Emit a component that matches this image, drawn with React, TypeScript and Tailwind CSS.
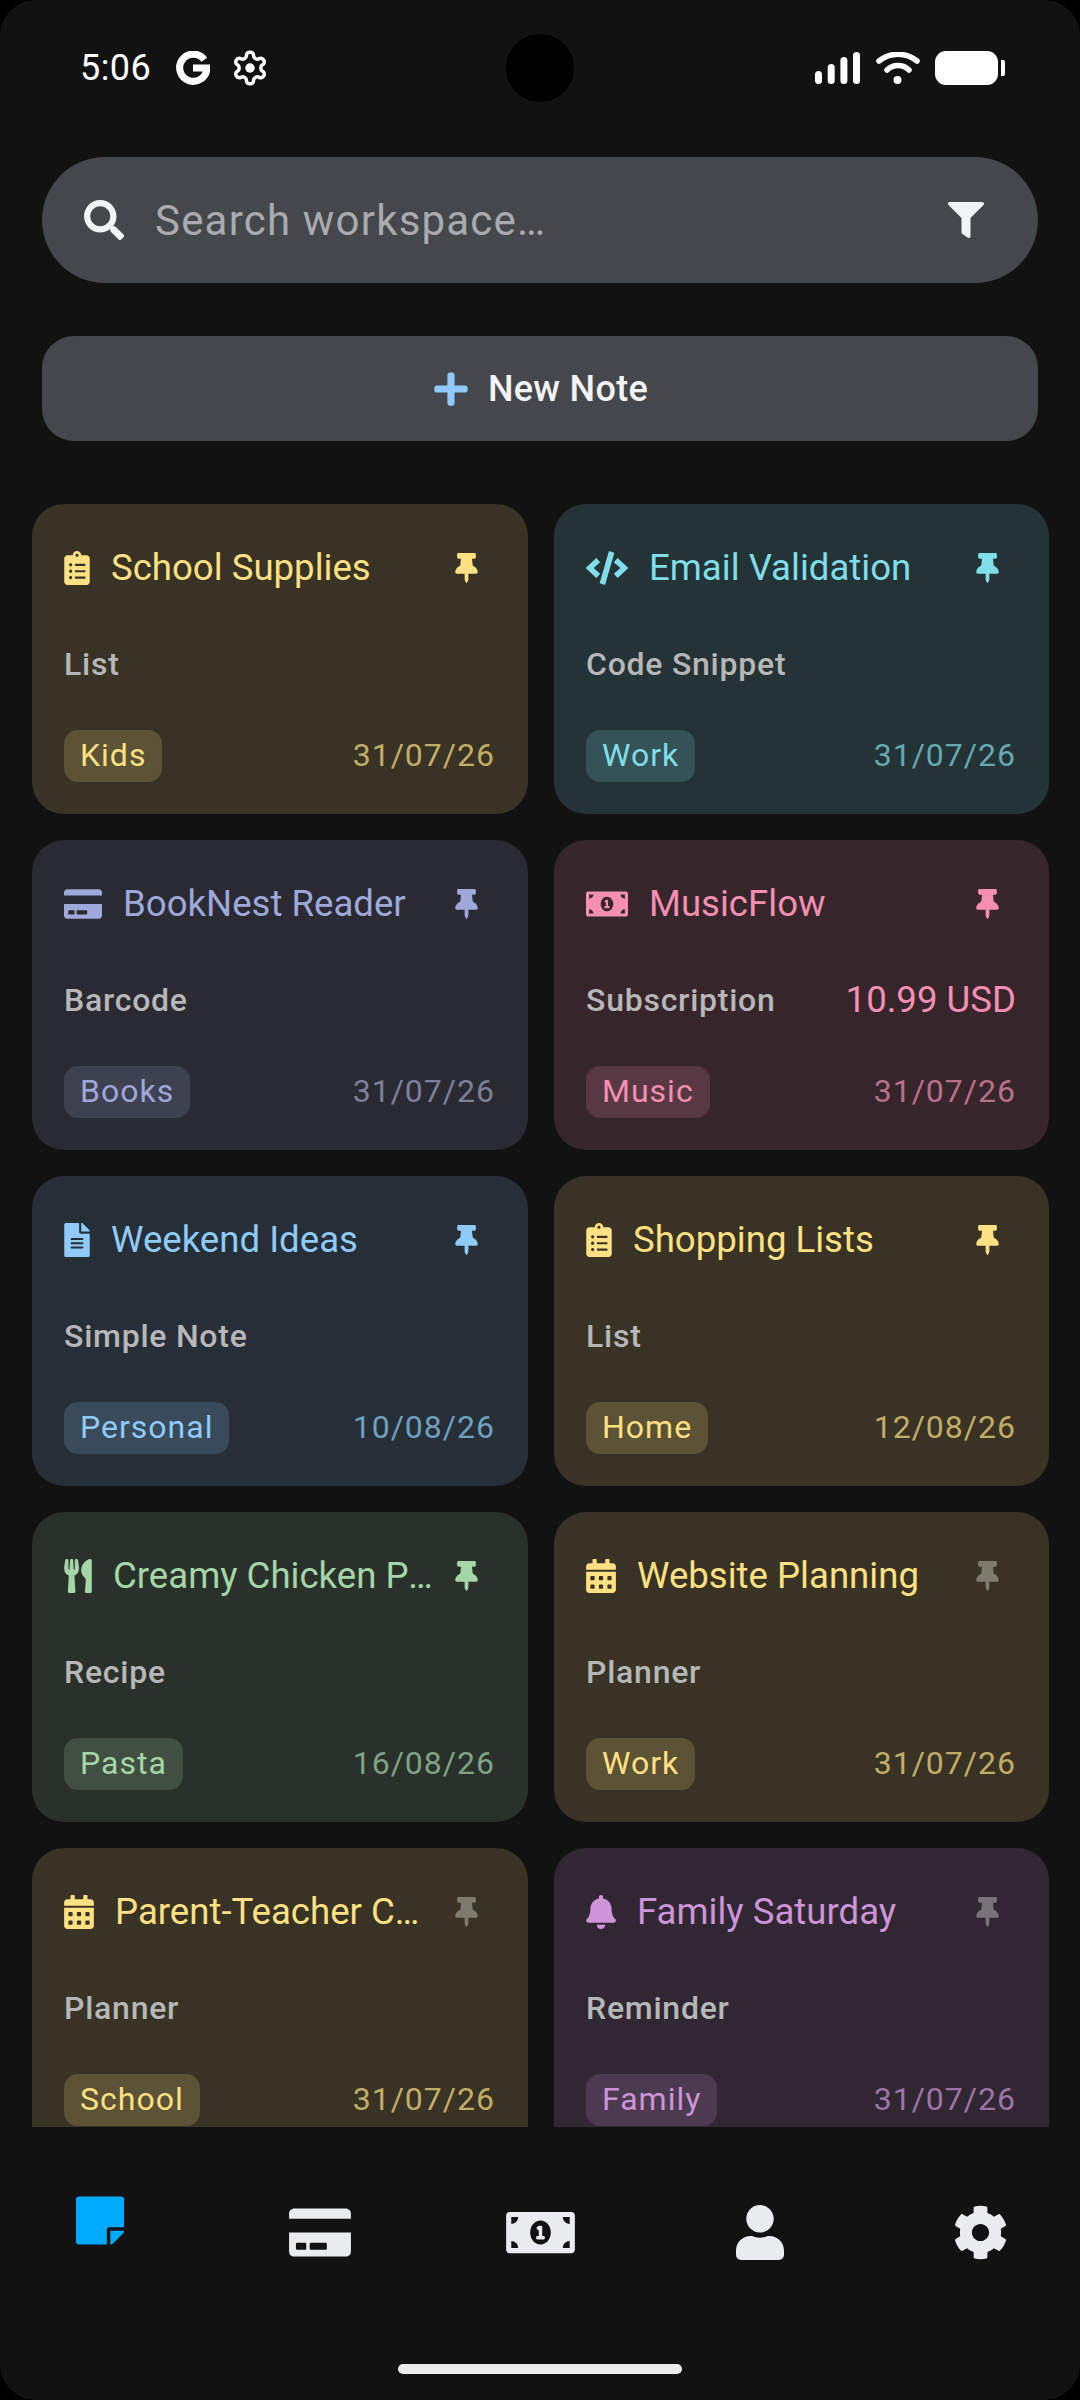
import { FaBell, FaCalendarAlt, FaClipboardList, FaCode, FaCog, FaCreditCard, FaFileAlt, FaFilter, FaMoneyBillAlt, FaPlus, FaSearch, FaStickyNote, FaThumbtack, FaUser, FaUtensils } from 'react-icons/fa'
import type { IconType } from 'react-icons'

type Tone = { card: string; title: string; tag: string; date: string }

const yellow: Tone = { card: 'bg-[#383324]', title: 'text-[#ffe082]', tag: 'bg-[#5c5235]', date: 'text-[#c3ac66]' }
const cyan: Tone = { card: 'bg-[#243335]', title: 'text-[#80deea]', tag: 'bg-[#355256]', date: 'text-[#66a9b2]' }
const indigo: Tone = { card: 'bg-[#292a32]', title: 'text-[#9fa8da]', tag: 'bg-[#3e4150]', date: 'text-[#7d8099]' }
const pink: Tone = { card: 'bg-[#36262b]', title: 'text-[#f48fb1]', tag: 'bg-[#583943]', date: 'text-[#b8708a]' }
const blue: Tone = { card: 'bg-[#262f37]', title: 'text-[#90caf9]', tag: 'bg-[#394b5a]', date: 'text-[#6fa0c0]' }
const green: Tone = { card: 'bg-[#2a312a]', title: 'text-[#a5d6a7]', tag: 'bg-[#404f41]', date: 'text-[#7fa383]' }
const purple: Tone = { card: 'bg-[#302732]', title: 'text-[#ce93d8]', tag: 'bg-[#4c3a50]', date: 'text-[#9e73a8]' }

type Note = {
  title: string
  kind: string
  tag: string
  date: string
  tone: Tone
  icon: IconType
  iconSize: string
  pinned?: boolean
  price?: string
}

const notes: Note[] = [
  { title: 'School Supplies', kind: 'List', tag: 'Kids', date: '31/07/26', tone: yellow, icon: FaClipboardList, iconSize: 'w-[26px]', pinned: true },
  { title: 'Email Validation', kind: 'Code Snippet', tag: 'Work', date: '31/07/26', tone: cyan, icon: FaCode, iconSize: 'w-[42px]', pinned: true },
  { title: 'BookNest Reader', kind: 'Barcode', tag: 'Books', date: '31/07/26', tone: indigo, icon: FaCreditCard, iconSize: 'w-[38px]', pinned: true },
  { title: 'MusicFlow', kind: 'Subscription', tag: 'Music', date: '31/07/26', tone: pink, icon: FaMoneyBillAlt, iconSize: 'w-[42px]', pinned: true, price: '10.99 USD' },
  { title: 'Weekend Ideas', kind: 'Simple Note', tag: 'Personal', date: '10/08/26', tone: blue, icon: FaFileAlt, iconSize: 'w-[26px]', pinned: true },
  { title: 'Shopping Lists', kind: 'List', tag: 'Home', date: '12/08/26', tone: yellow, icon: FaClipboardList, iconSize: 'w-[26px]', pinned: true },
  { title: 'Creamy Chicken Pasta Bake', kind: 'Recipe', tag: 'Pasta', date: '16/08/26', tone: green, icon: FaUtensils, iconSize: 'w-[28px]', pinned: true },
  { title: 'Website Planning', kind: 'Planner', tag: 'Work', date: '31/07/26', tone: yellow, icon: FaCalendarAlt, iconSize: 'w-[30px]' },
  { title: 'Parent-Teacher Conference', kind: 'Planner', tag: 'School', date: '31/07/26', tone: yellow, icon: FaCalendarAlt, iconSize: 'w-[30px]' },
  { title: 'Family Saturday', kind: 'Reminder', tag: 'Family', date: '31/07/26', tone: purple, icon: FaBell, iconSize: 'w-[30px]' },
]

function NoteCard({ note }: { note: Note }) {
  const { tone, icon: Icon } = note

  return (
    <div className={`flex h-[310px] flex-col rounded-[32px] px-[32px] pt-[42px] ${tone.card}`}>
      <div className="flex h-[44px] items-center">
        <Icon className={`h-[34px] shrink-0 ${note.iconSize} ${tone.title}`} />
        <span className={`ml-[21px] min-w-0 flex-1 truncate text-[36.6px] leading-[44px] ${tone.title}`}>{note.title}</span>
        <FaThumbtack className={`mr-[18px] ml-[20px] h-[30px] w-[23px] shrink-0 ${note.pinned ? tone.title : 'text-white/35'}`} />
      </div>

      <div className="mt-[52px] flex h-[44px] items-center justify-between pr-[1px]">
        <span className="text-[32px] leading-[44px] font-medium tracking-[0.75px] text-[#b7b7b7]">{note.kind}</span>
        {note.price && <span className={`text-[36.6px] leading-[44px] ${tone.title}`}>{note.price}</span>}
      </div>

      <div className="mt-[44px] flex items-center justify-between pr-[1px]">
        <span className={`flex h-[52px] items-center rounded-[14px] px-[16px] pb-[2px] text-[32px] tracking-[1px] ${tone.tag} ${tone.title}`}>{note.tag}</span>
        <span className={`pb-[2px] text-[32px] tracking-[1px] ${tone.date}`}>{note.date}</span>
      </div>
    </div>
  )
}

function StatusBar() {
  return (
    <div className="relative flex h-[136px] items-center justify-between pr-[75px] pl-[80px] text-white">
      <div className="flex items-center">
        <span className="text-[36px] leading-[44px] tracking-[0.4px]">5:06</span>
        <svg viewBox="0 0 24 24" className="ml-[25px] h-[34px] w-[34px]" fill="none" stroke="currentColor" strokeWidth="5">
          <path d="M20 6.2A9.6 9.6 0 1 0 21.8 12H12" />
        </svg>
        <svg viewBox="0 0 24 24" className="ml-[21px] h-[38px] w-[38px]" fill="none" stroke="currentColor" strokeWidth="2.2" strokeLinejoin="round">
          <path d="M12.22 2h-.44a2 2 0 0 0-2 2v.18a2 2 0 0 1-1 1.73l-.43.25a2 2 0 0 1-2 0l-.15-.08a2 2 0 0 0-2.73.73l-.22.38a2 2 0 0 0 .73 2.73l.15.1a2 2 0 0 1 1 1.72v.51a2 2 0 0 1-1 1.74l-.15.09a2 2 0 0 0-.73 2.73l.22.38a2 2 0 0 0 2.73.73l.15-.08a2 2 0 0 1 2 0l.43.25a2 2 0 0 1 1 1.73V20a2 2 0 0 0 2 2h.44a2 2 0 0 0 2-2v-.18a2 2 0 0 1 1-1.73l.43-.25a2 2 0 0 1 2 0l.15.08a2 2 0 0 0 2.73-.73l.22-.39a2 2 0 0 0-.73-2.73l-.15-.08a2 2 0 0 1-1-1.74v-.5a2 2 0 0 1 1-1.74l.15-.09a2 2 0 0 0 .73-2.73l-.22-.38a2 2 0 0 0-2.73-.73l-.15.08a2 2 0 0 1-2 0l-.43-.25a2 2 0 0 1-1-1.73V4a2 2 0 0 0-2-2z" />
          <circle cx="12" cy="12" r="3" fill="currentColor" stroke="none" />
        </svg>
      </div>

      {/* Camera cutout */}
      <div className="absolute top-[34px] left-[506px] h-[68px] w-[68px] rounded-full bg-black" />

      <div className="flex items-center">
        <svg viewBox="0 0 45 32" className="h-[32px] w-[45px]" fill="currentColor">
          <rect x="0" y="19" width="7" height="13" rx="3.5" />
          <rect x="12.7" y="12" width="7" height="20" rx="3.5" />
          <rect x="25.4" y="5" width="7" height="27" rx="3.5" />
          <rect x="38" y="0" width="7" height="32" rx="3.5" />
        </svg>
        <svg viewBox="0 0 44 32" className="ml-[16px] h-[32px] w-[44px]" fill="none" stroke="currentColor" strokeLinecap="round" strokeWidth="5.5">
          <path d="M3 9C14 0 30 0 41 9" />
          <path d="M11 18C17 12 27 12 33 18" />
          <circle cx="21.5" cy="28" r="2" fill="currentColor" strokeWidth="4" />
        </svg>
        <div className="ml-[15px] h-[34px] w-[63px] rounded-[11px] bg-white" />
        <div className="ml-[3px] h-[16px] w-[4px] rounded-r-[2px] bg-white" />
      </div>
    </div>
  )
}

export default function App() {
  return (
    <div className="h-[2400px] w-[1080px] bg-black font-['Roboto',sans-serif]">
      <div className="flex h-full flex-col overflow-hidden rounded-[36px] bg-[#121212]">
        <StatusBar />

        <div className="mx-[42px] mt-[21px] flex h-[126px] items-center rounded-full bg-[#44474b] pr-[54px] pl-[42px]">
          <FaSearch className="h-[40px] w-[40px] text-[#f2f3f5]" />
          <span className="ml-[31px] flex-1 text-[42px] tracking-[1.2px] text-[#a9abae]">Search workspace…</span>
          <FaFilter className="h-[36px] w-[36px] text-[#f2f3f5]" />
        </div>

        <div className="mx-[42px] mt-[53px] flex h-[105px] items-center justify-center rounded-[32px] bg-[#44474b]">
          <FaPlus className="h-[38px] w-[38px] text-[#90caf9]" />
          <span className="ml-[18px] text-[36px] font-medium tracking-[0.3px] text-[#f2f3f5]">New Note</span>
        </div>

        <div className="mt-[63px] h-[1623px] overflow-hidden">
          <div className="grid grid-cols-[496px_495px] gap-[26px] pl-[32px]">
            {notes.map((note) => (
              <NoteCard key={note.title} note={note} />
            ))}
          </div>
        </div>

        <div className="relative flex-1">
          <FaStickyNote className="absolute top-[66px] left-[76px] h-[55px] w-[48px] text-[#00aaff]" />
          <FaCreditCard className="absolute top-[78px] left-[289px] h-[55px] w-[62px] text-[#e9ebee]" />
          <FaMoneyBillAlt className="absolute top-[78px] left-[506px] h-[55px] w-[69px] text-[#e9ebee]" />
          <FaUser className="absolute top-[78px] left-[736px] h-[55px] w-[48px] text-[#e9ebee]" />
          <FaCog className="absolute top-[78px] left-[953px] h-[55px] w-[55px] text-[#e9ebee]" />
          <div className="absolute top-[237px] left-[398px] h-[10px] w-[284px] rounded-full bg-[#ececec]" />
        </div>
      </div>
    </div>
  )
}
